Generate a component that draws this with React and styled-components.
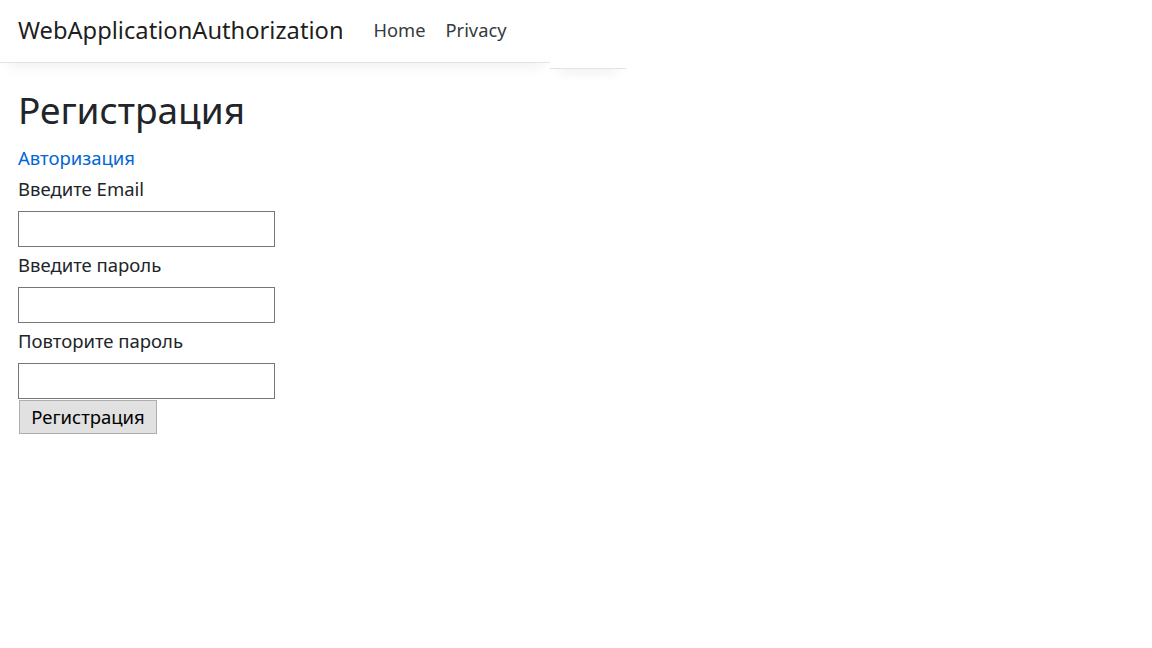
import React from "react";
import styled, { createGlobalStyle } from "styled-components";

const GlobalStyle = createGlobalStyle`
    html, body {
        margin: 0;
        padding: 0;
        background: #fff;
    }
    body {
        font-family: "Noto Sans", "Open Sans", sans-serif;
        font-size: 18.5px;
        line-height: 30px;
        color: #212529;
    }
`;

function App() {
    return (
        <Page>
            <GlobalStyle />
            <Header>
                <Navbar>
                    <Brand href="#">WebApplicationAuthorization</Brand>
                    <NavList>
                        <NavLink href="#">Home</NavLink>
                        <NavLink href="#">Privacy</NavLink>
                    </NavList>
                </Navbar>
                <NavTail />
            </Header>
            <Main>
                <Title>Регистрация</Title>
                <Link href="#">Авторизация</Link>
                <Form>
                    <Label>Введите Email</Label>
                    <Input type="text" />
                    <Label>Введите пароль</Label>
                    <Input type="password" />
                    <Label>Повторите пароль</Label>
                    <Input type="password" />
                    <Button type="button">Регистрация</Button>
                </Form>
            </Main>
        </Page>
    );
}

export default App;

const Page = styled.div`
    min-height: 648px;
`;
const Header = styled.header`
    display: flex;
    align-items: flex-start;
`;
const Navbar = styled.nav`
    width: 550px;
    height: 63px;
    box-sizing: border-box;
    display: flex;
    align-items: center;
    padding: 0 18px 2px;
    border-bottom: 1px solid #e3e3e3;
    box-shadow: 0 12px 12px -8px rgba(0, 0, 0, 0.06);
`;
const NavTail = styled.div`
    width: 76px;
    height: 69px;
    box-sizing: border-box;
    border-bottom: 1px solid #e3e3e3;
    box-shadow: 0 12px 12px -8px rgba(0, 0, 0, 0.06);
`;
const Brand = styled.a`
    font-size: 23.7px;
    color: rgba(0, 0, 0, 0.9);
    text-decoration: none;
    margin-right: 20px;
    white-space: nowrap;
`;
const NavList = styled.div`
    display: flex;
`;
const NavLink = styled.a`
    padding: 0 10px;
    font-size: 18.3px;
    color: #343a40;
    text-decoration: none;
    white-space: nowrap;
`;
const Main = styled.main`
    padding: 19px 18px 0;
`;
const Title = styled.h1`
    margin: 0 0 10px;
    font-size: 37px;
    font-weight: 400;
    line-height: 43px;
`;
const Link = styled.a`
    display: block;
    padding-top: 2px;
    height: 28px;
    color: #0366d6;
    text-decoration: none;
`;
const Form = styled.form`
    display: flex;
    flex-direction: column;
    align-items: flex-start;
`;
const Label = styled.label`
    margin-bottom: 10px;
    padding-top: 3px;
    height: 27px;
`;
const Input = styled.input`
    width: 257px;
    height: 36px;
    box-sizing: border-box;
    border: 1px solid #767676;
    margin: 0;
    padding: 1px 2px;
    font-size: 16px;
`;
const Button = styled.button`
    margin: 1px 0 0 1px;
    width: 138px;
    height: 34px;
    box-sizing: border-box;
    background: #e1e1e1;
    border: 1px solid #adadad;
    font-family: inherit;
    font-size: 18.5px;
    line-height: 30px;
    color: #000;
    padding: 0;
`;
